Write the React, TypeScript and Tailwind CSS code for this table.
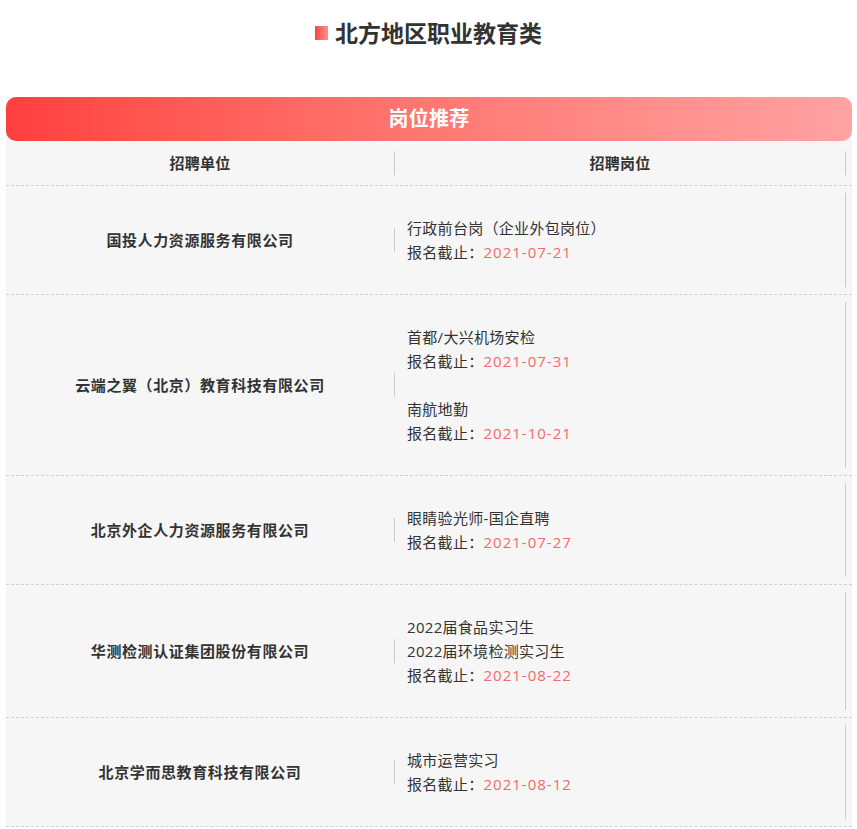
import React from 'react';

interface Job {
  title: string[];
  deadline: string;
}

interface Row {
  company: string;
  jobs: Job[];
}

const rows: Row[] = [
  { company: '国投人力资源服务有限公司', jobs: [{ title: ['行政前台岗（企业外包岗位）'], deadline: '2021-07-21' }] },
  {
    company: '云端之翼（北京）教育科技有限公司',
    jobs: [
      { title: ['首都/大兴机场安检'], deadline: '2021-07-31' },
      { title: ['南航地勤'], deadline: '2021-10-21' },
    ],
  },
  { company: '北京外企人力资源服务有限公司', jobs: [{ title: ['眼睛验光师-国企直聘'], deadline: '2021-07-27' }] },
  {
    company: '华测检测认证集团股份有限公司',
    jobs: [{ title: ['2022届食品实习生', '2022届环境检测实习生'], deadline: '2021-08-22' }],
  },
  { company: '北京学而思教育科技有限公司', jobs: [{ title: ['城市运营实习'], deadline: '2021-08-12' }] },
];

export default function App() {
  return (
    <div
      className="w-[857px] min-h-[829px] bg-white text-[#333]"
      style={{ fontFamily: '"Open Sans", "Noto Sans CJK SC", sans-serif' }}
    >
      <div className="flex items-center justify-center pt-[18px] h-[48px] mb-[49px]">
        <span className="w-[13px] h-[14px] bg-gradient-to-r from-[#ff4040] to-[#ff8f8f] mr-[7px]" />
        <h1 className="text-[23px] leading-[30px] font-bold text-[#333]">北方地区职业教育类</h1>
      </div>

      <div className="ml-[6px] w-[846px] bg-[#f6f6f6]">
        <div className="h-[44px] rounded-[10px] bg-gradient-to-r from-[#ff3f3f] to-[#ffa2a2] flex items-center justify-center">
          <span className="text-white text-[20px] font-bold leading-[28px] tracking-[0.3px]">岗位推荐</span>
        </div>

        <div className="flex h-[45px] border-b border-dashed border-[#d0d0d0] text-[15px] font-bold tracking-[0.3px]">
          <div className="w-[388px] flex items-center justify-center">招聘单位</div>
          <div className="flex-1 flex items-center">
            <span className="w-px h-[24px] bg-[#cccccc]" />
            <div className="flex-1 text-center">招聘岗位</div>
            <span className="w-px h-[24px] bg-[#cccccc] mr-[6px]" />
          </div>
        </div>

        {rows.map((row) => (
          <div key={row.company} className="flex border-b border-dashed border-[#d0d0d0]">
            <div className="w-[388px] flex items-center justify-center text-[15px] font-bold tracking-[0.6px]">
              {row.company}
            </div>
            <div className="flex-1 flex items-center my-[7px] mr-[6px] border-r border-[#cccccc] py-[23px]">
              <span className="w-px h-[24px] bg-[#cccccc]" />
              <div className="ml-[12px] flex flex-col gap-[24px] text-[15px] leading-[24px] tracking-[0.3px]">
                {row.jobs.map((job) => (
                  <div key={job.deadline + job.title[0]}>
                    {job.title.map((t) => (
                      <div key={t}>{t}</div>
                    ))}
                    <div>
                      报名截止：<span className="text-[#f46a6a] tracking-[1px]">{job.deadline}</span>
                    </div>
                  </div>
                ))}
              </div>
            </div>
          </div>
        ))}
      </div>
    </div>
  );
}
